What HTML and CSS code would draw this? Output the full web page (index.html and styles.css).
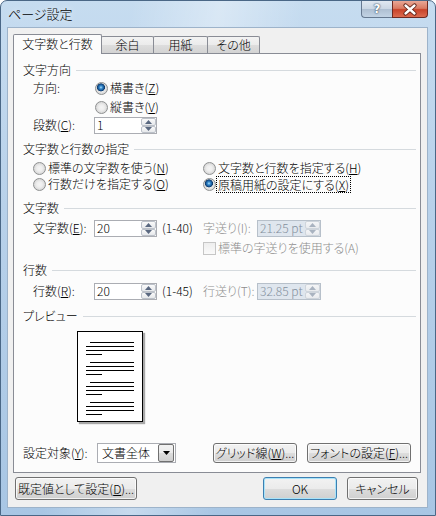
FILE: index.html
```html
<!DOCTYPE html>
<html lang="ja">
<head>
<meta charset="utf-8">
<title>ページ設定</title>
<link rel="stylesheet" href="styles.css">
</head>
<body>
<div class="window">
  <div class="titlebar">
    <span class="title">ページ設定</span>
    <div class="caption-btns">
      <span class="cbtn help">?</span>
      <span class="cbtn close"><svg width="34" height="15" viewBox="0 0 34 15"><path d="M12.5 3.5 L21.5 11.5 M21.5 3.5 L12.5 11.5" stroke="#5b1d12" stroke-width="4.2" stroke-linecap="round" fill="none"/><path d="M12.5 3.5 L21.5 11.5 M21.5 3.5 L12.5 11.5" stroke="#fff" stroke-width="2.4" stroke-linecap="round" fill="none"/></svg></span>
    </div>
  </div>
  <div class="client">
    <div class="tabs">
      <div class="tab active">文字数と行数</div>
      <div class="tab w53">余白</div>
      <div class="tab w55">用紙</div>
      <div class="tab w53">その他</div>
    </div>
    <div class="panel">
      <div class="ghead">文字方向</div>
      <div class="row h20 ind">
        <span class="lbl w62">方向:</span>
        <span class="radio on"></span><span class="rtext">横書き(<u>Z</u>)</span>
      </div>
      <div class="row h18 ind">
        <span class="lbl w62"></span>
        <span class="radio"></span><span class="rtext">縦書き(<u>V</u>)</span>
      </div>
      <div class="row h18 ind">
        <span class="lbl w61">段数(<u>C</u>):</span>
        <div class="tb"><span class="tbv">1</span><span class="spin"><span class="sp up"><svg width="7" height="4" viewBox="0 0 7 4"><path d="M0 4 L3.5 0 L7 4Z" fill="#5a6880"/></svg></span><span class="sp dn"><svg width="7" height="4" viewBox="0 0 7 4"><path d="M0 0 L3.5 4 L7 0Z" fill="#5a6880"/></svg></span></span></div>
      </div>

      <div class="ghead mt7">文字数と行数の指定</div>
      <div class="rgrid">
        <div class="row h16"><span class="radio"></span><span class="rtext">標準の文字数を使う(<u>N</u>)</span></div>
        <div class="row h16"><span class="radio"></span><span class="rtext">文字数と行数を指定する(<u>H</u>)</span></div>
        <div class="row h16"><span class="radio"></span><span class="rtext">行数だけを指定する(<u>O</u>)</span></div>
        <div class="row h16"><span class="radio on"></span><span class="rtext focus">原稿用紙の設定にする(<u>X</u>)</span></div>
      </div>

      <div class="ghead mt8">文字数</div>
      <div class="row h20 ind mt2">
        <span class="lbl w61">文字数(<u>E</u>):</span>
        <div class="tb"><span class="tbv">20</span><span class="spin"><span class="sp up"><svg width="7" height="4" viewBox="0 0 7 4"><path d="M0 4 L3.5 0 L7 4Z" fill="#5a6880"/></svg></span><span class="sp dn"><svg width="7" height="4" viewBox="0 0 7 4"><path d="M0 0 L3.5 4 L7 0Z" fill="#5a6880"/></svg></span></span></div>
        <span class="range">(1-40)</span>
        <span class="lbl w54 dis">字送り(I):</span>
        <div class="tb tbdis"><span class="tbv">21.25 pt</span><span class="spin"><span class="sp up"><svg width="7" height="4" viewBox="0 0 7 4"><path d="M0 4 L3.5 0 L7 4Z" fill="#a9b3c0"/></svg></span><span class="sp dn"><svg width="7" height="4" viewBox="0 0 7 4"><path d="M0 0 L3.5 4 L7 0Z" fill="#a9b3c0"/></svg></span></span></div>
      </div>
      <div class="row h20 chkrow">
        <span class="chk"></span><span class="rtext dis">標準の字送りを使用する(A)</span>
      </div>

      <div class="ghead mt4">行数</div>
      <div class="row h20 ind mt3">
        <span class="lbl w61">行数(<u>R</u>):</span>
        <div class="tb"><span class="tbv">20</span><span class="spin"><span class="sp up"><svg width="7" height="4" viewBox="0 0 7 4"><path d="M0 4 L3.5 0 L7 4Z" fill="#5a6880"/></svg></span><span class="sp dn"><svg width="7" height="4" viewBox="0 0 7 4"><path d="M0 0 L3.5 4 L7 0Z" fill="#5a6880"/></svg></span></span></div>
        <span class="range">(1-45)</span>
        <span class="lbl w54 dis">行送り(T):</span>
        <div class="tb tbdis"><span class="tbv">32.85 pt</span><span class="spin"><span class="sp up"><svg width="7" height="4" viewBox="0 0 7 4"><path d="M0 4 L3.5 0 L7 4Z" fill="#a9b3c0"/></svg></span><span class="sp dn"><svg width="7" height="4" viewBox="0 0 7 4"><path d="M0 0 L3.5 4 L7 0Z" fill="#a9b3c0"/></svg></span></span></div>
      </div>

      <div class="ghead mt7">プレビュー</div>
      <div class="page">
        <svg width="64" height="89" viewBox="0 0 64 89">
          <g stroke="#000" stroke-width="1">
            <path d="M12 10.5H56 M8 14.5H56 M8 18.5H56 M8 22.5H24"/>
            <path d="M12 30.5H56 M8 34.5H56 M8 38.5H56 M8 42.5H24"/>
            <path d="M12 50.5H56 M8 54.5H56 M8 58.5H56 M8 62.5H24"/>
            <path d="M12 70.5H56 M8 74.5H56 M8 78.5H56 M8 82.5H24"/>
          </g>
        </svg>
      </div>

      <div class="row h20 bottomrow">
        <span class="lbl w74">設定対象(<u>Y</u>):</span>
        <div class="combo"><span class="cv">文書全体</span><span class="cdrop"><svg width="7" height="4" viewBox="0 0 7 4"><path d="M0 0 L3.5 4 L7 0Z" fill="#000"/></svg></span></div>
        <span class="btn small w84">グリッド線(<u>W</u>)...</span>
        <span class="btn small w104">フォントの設定(<u>F</u>)...</span>
      </div>
    </div>
    <div class="buttons">
      <span class="btn w122">既定値として設定(<u>D</u>)...</span>
      <span class="spacer"></span>
      <span class="btn ok w74">OK</span>
      <span class="btn w71">キャンセル</span>
    </div>
  </div>
</div>
</body>
</html>
```

FILE: styles.css
```css
* { box-sizing: border-box; }
html, body { margin: 0; padding: 0; }
body {
  width: 436px;
  height: 516px;
  overflow: hidden;
  background: #ffffff;
  font-family: "Noto Sans CJK JP", "Noto Sans CJK SC", sans-serif;
  font-size: 12px;
  font-weight: 300;
  font-feature-settings: "palt";
  color: #000;
  line-height: 16px;
}
u { text-decoration: underline; text-underline-offset: 1px; }

.window {
  width: 436px;
  height: 516px;
  display: flex;
  flex-direction: column;
  border: 1px solid #4a6786;
  border-radius: 7px 7px 0 0;
  background:
    linear-gradient(100deg, rgba(255,255,255,0) 25%, rgba(255,255,255,0.35) 42%, rgba(255,255,255,0) 58%),
    linear-gradient(180deg, #c6dcf0 0%, #b8d1ea 40%, #a8c6e4 100%);
}

.titlebar {
  height: 26px;
  flex: none;
  display: flex;
  justify-content: space-between;
  align-items: flex-start;
  padding-left: 7px;
  padding-right: 7px;
}
.title {
  margin-top: 5px;
  font-size: 13px;
  color: #000;
  text-shadow: 0 0 6px rgba(255,255,255,0.9);
}
.caption-btns { display: flex; }
.cbtn {
  height: 17px;
  display: flex;
  align-items: center;
  justify-content: center;
}
.help {
  width: 31px;
  border: 1px solid #667990;
  border-top: none;
  border-right: none;
  border-radius: 0 0 0 4px;
  background: linear-gradient(180deg, #e0e8f1 0%, #cbd7e4 48%, #aebfd2 52%, #c2d3e4 100%);
  color: #fff;
  font-family: "DejaVu Sans", sans-serif;
  font-weight: bold;
  font-size: 12px;
  text-shadow: 0 0 2px #34465c, 0 0 1px #34465c;
}
.close {
  width: 36px;
  border: 1px solid #6e2a22;
  border-top: none;
  border-radius: 0 0 4px 0;
  background: linear-gradient(180deg, #e9a796 0%, #d97a62 46%, #c8432a 54%, #dc6b50 100%);
}

.client {
  flex: 1;
  margin: 0 7px 7px 6px;
  border: 1px solid #9db3ca;
  background: #f0f0f0;
  display: flex;
  flex-direction: column;
}

.tabs {
  height: 19px;
  margin-top: 6px;
  margin-left: 5px;
  display: flex;
  align-items: flex-end;
  flex: none;
}
.tab {
  height: 17px;
  border: 1px solid #898c95;
  border-bottom: none;
  border-radius: 2px 2px 0 0;
  background: linear-gradient(180deg, #f3f3f3 0%, #ebebeb 50%, #dddddd 51%, #d3d3d3 100%);
  display: flex;
  align-items: center;
  justify-content: center;
  margin-left: -1px;
  padding-bottom: 1px;
}
.tab.active {
  width: 89px;
  height: 20px;
  margin-left: 0;
  margin-bottom: -1px;
  background: #fcfcfc;
  position: relative;
  z-index: 1;
  padding-bottom: 2px;
}
.w53 { width: 53px; }
.w55 { width: 55px; }

.panel {
  height: 420px;
  flex: none;
  margin-left: 5px;
  margin-right: 6px;
  border: 1px solid #898c95;
  background: #fcfcfc;
  padding: 8px 4px 0 9px;
}

.ghead {
  height: 16px;
  display: flex;
  align-items: center;
  gap: 5px;
}
.ghead::after {
  content: "";
  flex: 1;
  height: 1px;
  background: #d5dade;
}
.mt2 { margin-top: 2px; }
.mt3 { margin-top: 3px; }
.mt4 { margin-top: 4px; }
.mt7 { margin-top: 7px; }
.mt8 { margin-top: 8px; }

.row { display: flex; align-items: center; white-space: nowrap; }
.h16 { height: 16px; }
.h18 { height: 18px; }
.h20 { height: 20px; }
.ind { padding-left: 10px; }
.lbl { flex: none; }
.w54 { width: 54px; }
.w61 { width: 61px; }
.w62 { width: 62px; }
.w74 { width: 74px; }
.dis { color: #8d8d8d; }

.radio {
  flex: none;
  width: 13px;
  height: 13px;
  border-radius: 50%;
  border: 1px solid #8e9091;
  background: radial-gradient(circle at 50% 50%, #f4f4f4 0, #eeeeee 35%, #d3d3d3 80%, #e6e6e6 100%);
}
.radio.on {
  background:
    radial-gradient(circle at 45% 40%, #b8e4fa 0, #3b8fd0 1.4px, #1b5c9d 2.8px, #0d3a6a 3.7px, rgba(13,58,106,0) 4.3px),
    radial-gradient(circle at 50% 50%, #f4f4f4 0, #eeeeee 35%, #d3d3d3 80%, #e6e6e6 100%);
}
.rtext { margin-left: 2px; }
.rtext.focus {
  margin-left: 0;
  border: 1px dotted #000;
  padding: 0 1px;
  line-height: 15px;
}

.rgrid {
  margin-top: 3px;
  padding-left: 10px;
  display: grid;
  grid-template-columns: 170px 1fr;
}

.tb {
  flex: none;
  width: 63px;
  height: 17px;
  border: 1px solid #abadb3;
  background: #fff;
  display: flex;
  align-items: center;
  padding-left: 2px;
}
.tbv { flex: 1; font-size: 12px; }
.spin {
  flex: none;
  width: 15px;
  height: 15px;
  display: flex;
  flex-direction: column;
}
.sp {
  height: 8px;
  border: 1px solid #bcc1c9;
  border-radius: 2px;
  background: linear-gradient(180deg, #fafafa 0%, #e6e8eb 100%);
  display: flex;
  align-items: center;
  justify-content: center;
}
.sp.dn { height: 7px; }
.tbdis {
  width: 64px;
  background: #dfe6ee;
  border-color: #b7c0ca;
  color: #84909d;
}
.tbdis .sp { border-color: #cfd5dc; background: linear-gradient(180deg, #f4f5f7 0%, #e9ebee 100%); }

.range {
  flex: none;
  width: 41px;
  margin-left: 5px;
}
.chkrow { padding-left: 180px; }
.chk {
  flex: none;
  width: 13px;
  height: 13px;
  border: 1px solid #c6c6c6;
  background: linear-gradient(180deg, #eeeeee 0%, #fafafa 100%);
}

.page {
  margin-top: 7px;
  margin-left: 54px;
  width: 66px;
  height: 91px;
  border: 1px solid #000;
  background: #fff;
  box-shadow: 2px 2px 1px #a8a8a8;
  display: flex;
}

.bottomrow { margin-top: 21px; }
.combo {
  flex: none;
  width: 79px;
  height: 20px;
  border: 1px solid #abadb3;
  background: #fff;
  display: flex;
  align-items: center;
  padding-left: 4px;
  padding-right: 1px;
}
.cv { flex: 1; }
.cdrop {
  flex: none;
  width: 16px;
  height: 18px;
  border: 1px solid #707070;
  border-radius: 2px;
  background: linear-gradient(180deg, #f2f2f2 0%, #ebebeb 50%, #dddddd 51%, #cfcfcf 100%);
  display: flex;
  align-items: center;
  justify-content: center;
}

.btn {
  flex: none;
  height: 23px;
  border: 1px solid #707070;
  border-radius: 3px;
  background: linear-gradient(180deg, #f2f2f2 0%, #ebebeb 50%, #dddddd 51%, #cfcfcf 100%);
  box-shadow: inset 0 0 0 1px rgba(255,255,255,0.75);
  display: flex;
  align-items: center;
  justify-content: center;
  white-space: nowrap;
}
.btn.small { height: 20px; }
.bottomrow .w84 { margin-left: 37px; }
.bottomrow .w104 { margin-left: 10px; }
.w84 { width: 84px; }
.w104 { width: 104px; }
.w122 { width: 122px; }
.w71 { width: 71px; }
.ok {
  border-color: #3c7fb1;
  box-shadow: inset 0 0 0 1px #a9e3f9;
  margin-right: 10px;
}
.buttons {
  height: 23px;
  flex: none;
  margin-top: 4px;
  padding-left: 7px;
  padding-right: 9px;
  display: flex;
}
.spacer { flex: 1; }
```
